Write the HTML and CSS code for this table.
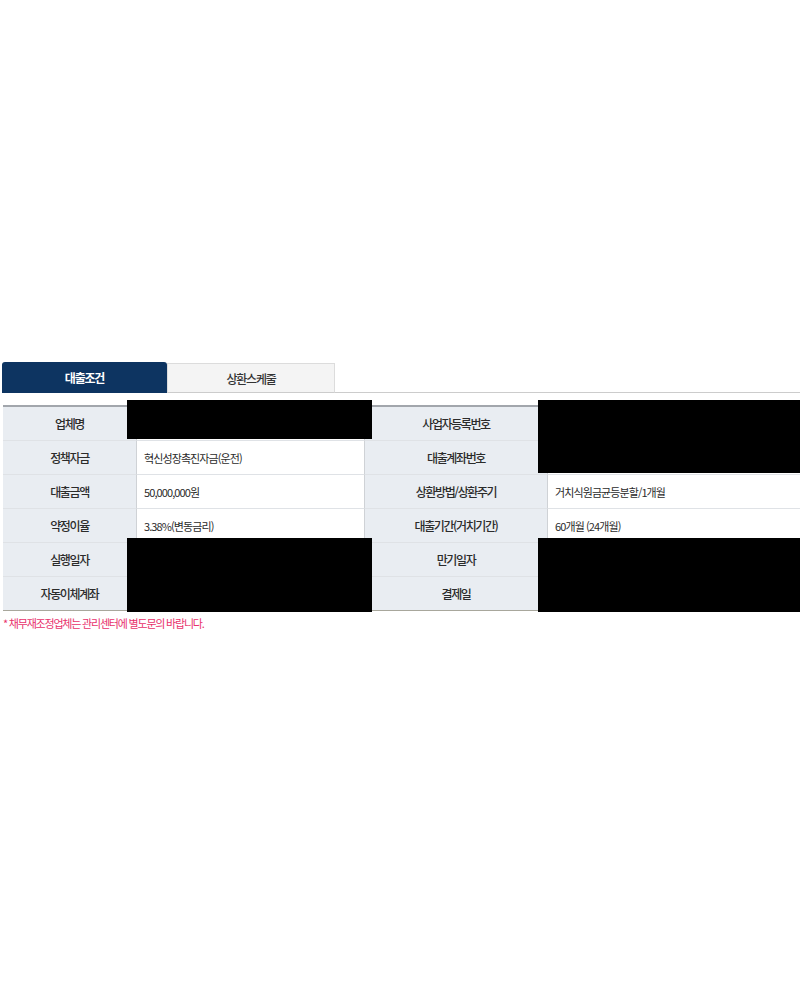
FILE: index.html
```html
<!DOCTYPE html>
<html lang="ko">
<head>
<meta charset="utf-8">
<title>대출조건</title>
<link rel="stylesheet" href="styles.css">
</head>
<body>
<div class="page">
  <div class="tabs">
    <div class="tab active">대출조건</div>
    <div class="tab">상환스케줄</div>
    <div class="tab-rest"></div>
  </div>
  <div class="table-wrap">
    <div class="grid">
      <div class="th">업체명</div><div class="td"></div>
      <div class="th">사업자등록번호</div><div class="td"></div>
      <div class="th">정책자금</div><div class="td">혁신성장촉진자금(운전)</div>
      <div class="th">대출계좌번호</div><div class="td"></div>
      <div class="th">대출금액</div><div class="td">50,000,000원</div>
      <div class="th">상환방법/상환주기</div><div class="td">거치식원금균등분할/1개월</div>
      <div class="th">약정이율</div><div class="td">3.38%(변동금리)</div>
      <div class="th">대출기간(거치기간)</div><div class="td">60개월 (24개월)</div>
      <div class="th">실행일자</div><div class="td"></div>
      <div class="th">만기일자</div><div class="td"></div>
      <div class="th">자동이체계좌</div><div class="td"></div>
      <div class="th">결제일</div><div class="td"></div>
    </div>
    <div class="redact r1"></div>
    <div class="redact r2"></div>
    <div class="redact r3"></div>
    <div class="redact r4"></div>
  </div>
  <p class="note">* 채무재조정업체는 관리센터에 별도문의 바랍니다.</p>
</div>
</body>
</html>
```

FILE: styles.css
```css
html, body {
  margin: 0;
  padding: 0;
  background: #ffffff;
}
body {
  font-family: "Noto Sans CJK KR", "Noto Sans", sans-serif;
  color: #333333;
  overflow: hidden;
}
.page {
  padding-top: 362px;
  width: 800px;
}
.tabs {
  display: flex;
  align-items: flex-end;
  height: 31px;
  padding-left: 2px;
}
.tab {
  box-sizing: border-box;
  width: 168px;
  height: 30px;
  display: flex;
  align-items: center;
  justify-content: center;
  font-size: 12px;
  font-weight: 500;
  letter-spacing: -1.2px;
  color: #333333;
  background: #f4f4f4;
  border: 1px solid #dcdcdc;
  border-bottom: 1px solid #cccccc;
}
.tab.active {
  height: 31px;
  width: 165px;
  background: #0d3461;
  color: #ffffff;
  font-weight: 700;
  border: none;
  border-radius: 3px 3px 0 0;
}
.tab-rest {
  flex: 1;
  height: 1px;
  background: #cccccc;
}
.table-wrap {
  position: relative;
  margin-top: 12px;
  padding-left: 3px;
}
.grid {
  display: grid;
  grid-template-columns: 133px 229px 182px 1fr;
  border-top: 2px solid #a2a6ac;
  border-bottom: 1px solid #a8a79c;
}
.th, .td {
  box-sizing: border-box;
  height: 34px;
  display: flex;
  align-items: center;
  border-bottom: 1px solid #dfe2e6;
  font-size: 12px;
}
.grid > :nth-last-child(-n+4) {
  border-bottom: none;
  height: 33px;
}
.th {
  justify-content: center;
  background: #e9edf2;
  letter-spacing: -1.4px;
  font-weight: 500;
  color: #2b2b2b;
}
.td {
  background: #ffffff;
  padding-left: 7px;
  letter-spacing: -0.9px;
  font-size: 11px;
  color: #2b2b2b;
  border-left: 1px solid #cfd2d6;
  border-right: 1px solid #cfd2d6;
}
.grid > :nth-child(4n) {
  border-right: none;
}
.redact {
  position: absolute;
  background: #000000;
}
.r1 { left: 127px; top: -5px; width: 245px; height: 39px; }
.r2 { left: 538px; top: -5px; width: 262px; height: 73px; }
.r3 { left: 127px; top: 133px; width: 245px; height: 74px; }
.r4 { left: 538px; top: 133px; width: 262px; height: 74px; }
.note {
  margin: 4px 0 0 3px;
  font-size: 11px;
  letter-spacing: -1.2px;
  color: #e8326c;
}
```
